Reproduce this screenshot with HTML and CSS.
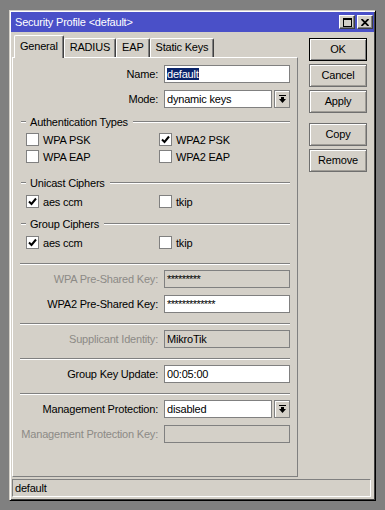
FILE: index.html
```
<!DOCTYPE html>
<html lang="en">

<head>
  <meta charset="UTF-8">
  <meta name="viewport" content="width=device-width, initial-scale=1.0">
  <title>Security Profile</title>
  <link rel="stylesheet" href="styles.css">
</head>

<body>
  <div class="window">
    <div class="titlebar">
      <span class="title">Security Profile &lt;default&gt;</span>
      <div class="title-btns">
        <span class="title-btn">
          <svg width="9" height="9" viewBox="0 0 9 9"><rect x="0.5" y="0.5" width="8" height="8" fill="none" stroke="#000" /><rect x="0" y="0" width="9" height="2" fill="#000" /></svg>
        </span>
        <span class="title-btn">
          <svg width="8" height="7" viewBox="0 0 8 7"><path d="M0.5 0 L7.5 7 M7.5 0 L0.5 7" stroke="#000" stroke-width="1.8" /></svg>
        </span>
      </div>
    </div>

    <div class="content">
      <div class="main">
        <div class="left">
          <div class="tabs">
            <div class="tab active">General</div>
            <div class="tab">RADIUS</div>
            <div class="tab">EAP</div>
            <div class="tab">Static Keys</div>
          </div>

          <div class="panel">
            <div class="row first">
              <label>Name:</label>
              <div class="field"><span class="selected">default</span></div>
            </div>
            <div class="row">
              <label>Mode:</label>
              <div class="field">dynamic keys</div>
              <div class="drop">
                <svg width="7" height="8" viewBox="0 0 7 8"><rect x="0" y="0" width="7" height="1" fill="#000" /><path d="M2 2h3v2h2l-3.5 4l-3.5-4h2z" fill="#000" /></svg>
              </div>
            </div>

            <div class="group">Authentication Types</div>
            <div class="checks">
              <div class="check"><span class="box"></span>WPA PSK</div>
              <div class="check"><span class="box"><svg width="9" height="9" viewBox="0 0 9 9"><path d="M1 4.5 L3.5 7 L8 1.5" stroke="#000" stroke-width="2" fill="none" /></svg></span>WPA2 PSK</div>
              <div class="check"><span class="box"></span>WPA EAP</div>
              <div class="check"><span class="box"></span>WPA2 EAP</div>
            </div>

            <div class="group group-gap">Unicast Ciphers</div>
            <div class="checks">
              <div class="check"><span class="box"><svg width="9" height="9" viewBox="0 0 9 9"><path d="M1 4.5 L3.5 7 L8 1.5" stroke="#000" stroke-width="2" fill="none" /></svg></span>aes ccm</div>
              <div class="check"><span class="box"></span>tkip</div>
            </div>

            <div class="group">Group Ciphers</div>
            <div class="checks">
              <div class="check"><span class="box"><svg width="9" height="9" viewBox="0 0 9 9"><path d="M1 4.5 L3.5 7 L8 1.5" stroke="#000" stroke-width="2" fill="none" /></svg></span>aes ccm</div>
              <div class="check"><span class="box"></span>tkip</div>
            </div>

            <div class="sep sep-first"></div>
            <div class="row after-sep disabled">
              <label>WPA Pre-Shared Key:</label>
              <div class="field"><span class="pw">*********</span></div>
            </div>
            <div class="row">
              <label>WPA2 Pre-Shared Key:</label>
              <div class="field"><span class="pw">*************</span></div>
            </div>

            <div class="sep"></div>
            <div class="row after-sep disabled">
              <label>Supplicant Identity:</label>
              <div class="field">MikroTik</div>
            </div>

            <div class="sep"></div>
            <div class="row after-sep">
              <label>Group Key Update:</label>
              <div class="field">00:05:00</div>
            </div>

            <div class="sep"></div>
            <div class="row after-sep">
              <label>Management Protection:</label>
              <div class="field">disabled</div>
              <div class="drop">
                <svg width="7" height="8" viewBox="0 0 7 8"><rect x="0" y="0" width="7" height="1" fill="#000" /><path d="M2 2h3v2h2l-3.5 4l-3.5-4h2z" fill="#000" /></svg>
              </div>
            </div>
            <div class="row disabled">
              <label>Management Protection Key:</label>
              <div class="field"></div>
            </div>
          </div>
        </div>

        <div class="buttons">
          <div class="btn default">OK</div>
          <div class="btn">Cancel</div>
          <div class="btn">Apply</div>
          <div class="btn btn-gap">Copy</div>
          <div class="btn">Remove</div>
        </div>
      </div>

      <div class="status">default</div>
    </div>
  </div>
</body>

</html>
```

FILE: styles.css
```
* {
  box-sizing: border-box;
}

body {
  margin: 0;
  background: #808080;
  font-family: "Liberation Sans", Arial, sans-serif;
  font-size: 11px;
  letter-spacing: -0.2px;
  color: #000;
}

.window {
  margin: 10px 0 0 9px;
  width: 367px;
  height: 491px;
  background: #d4d0c8;
  border: 1px solid;
  border-color: #d4d0c8 #000 #000 #d4d0c8;
  box-shadow: inset 1px 1px #fff, inset -1px -1px #404040;
  padding: 1px;
  display: flex;
  flex-direction: column;
}

.titlebar {
  height: 20px;
  background: #4a50c8;
  color: #fff;
  display: flex;
  align-items: center;
  justify-content: space-between;
  padding-left: 4px;
}

.title-btns {
  display: flex;
  gap: 2px;
  margin-right: 1px;
}

.title-btn {
  width: 16px;
  height: 14px;
  background: #d4d0c8;
  border: 1px solid;
  border-color: #fff #404040 #404040 #fff;
  box-shadow: inset -1px -1px #808080;
  display: flex;
  align-items: center;
  justify-content: center;
}

.content {
  flex: 1;
  display: flex;
  flex-direction: column;
  padding: 3px 3px 2px 1px;
}

.main {
  flex: 1;
  display: flex;
  gap: 11px;
}

.left {
  width: 286px;
  display: flex;
  flex-direction: column;
}

/* tabs */
.tabs {
  height: 22px;
  display: flex;
  align-items: flex-end;
  padding-left: 2px;
}

.tab {
  height: 19px;
  padding: 0 5px;
  line-height: 17px;
  border: 1px solid;
  border-bottom: none;
  border-color: #fff #404040 #fff #fff;
  box-shadow: inset -1px 0 #808080;
  border-radius: 2px 2px 0 0;
}

.tab.active {
  height: 23px;
  margin-bottom: -1px;
  line-height: 20px;
  background: #d4d0c8;
  position: relative;
  z-index: 1;
}

.panel {
  flex: 1;
  border: 1px solid;
  border-color: #fff #808080 #808080 #fff;
  padding: 0 7px;
}

/* form rows */
.row {
  display: flex;
  align-items: center;
  height: 18px;
  margin-top: 7px;
}

.row label {
  width: 138px;
  flex-shrink: 0;
  margin-right: 6px;
  text-align: right;
  white-space: nowrap;
}

.field {
  flex: 1;
  height: 18px;
  border: 1px solid #808080;
  background: #fff;
  padding-left: 2px;
  line-height: 16px;
  white-space: nowrap;
}

.row.disabled label {
  color: #8c8a86;
}

.row.disabled .field {
  background: #d4d0c8;
}

.row.after-sep {
  margin-top: 5px;
}

.selected {
  background: #0a246a;
  color: #fff;
}

.pw {
  letter-spacing: -0.6px;
}

.drop {
  width: 16px;
  height: 18px;
  margin-left: 2px;
  flex-shrink: 0;
  border: 1px solid #808080;
  box-shadow: inset 1px 1px #fff;
  display: flex;
  align-items: center;
  justify-content: center;
}

/* group headers */
.group {
  display: flex;
  align-items: center;
  height: 14px;
  margin-top: 7px;
}

.group::before,
.group::after {
  content: "";
  border-top: 1px solid #808080;
  border-bottom: 1px solid #fff;
}

.group::before {
  width: 5px;
  margin: 0 4px 0 1px;
}

.group::after {
  flex: 1;
  margin-left: 5px;
}

.group-gap {
  margin-top: 11px;
}

.checks {
  display: grid;
  grid-template-columns: 133px 1fr;
  padding-left: 6px;
  margin-top: 2px;
}

.group-gap+.checks,
.group-gap~.checks {
  margin-top: 3px;
}

.check {
  display: flex;
  align-items: center;
  height: 17px;
  gap: 4px;
}

.box {
  width: 13px;
  height: 13px;
  background: #fff;
  border: 1px solid #808080;
  display: flex;
  align-items: center;
  justify-content: center;
}

.sep {
  margin-top: 10px;
  border-top: 1px solid #808080;
  border-bottom: 1px solid #fff;
}

.sep-first {
  margin-top: 12px;
}

/* side buttons */
.buttons {
  width: 58px;
  margin-top: 3px;
  display: flex;
  flex-direction: column;
  gap: 3px;
}

.btn {
  height: 23px;
  border: 1px solid #6f6f6f;
  box-shadow: inset 1px 1px #fff, inset -1px -1px #a09d97;
  text-align: center;
  line-height: 21px;
}

.btn.default {
  border-color: #000;
  box-shadow: inset 1px 1px #fff, inset -1px -1px #808080;
}

.btn-gap {
  margin-top: 7px;
}

.status {
  height: 18px;
  margin-top: 2px;
  border: 1px solid;
  border-color: #808080 #fff #fff #808080;
  padding-left: 2px;
  line-height: 16px;
}
```
